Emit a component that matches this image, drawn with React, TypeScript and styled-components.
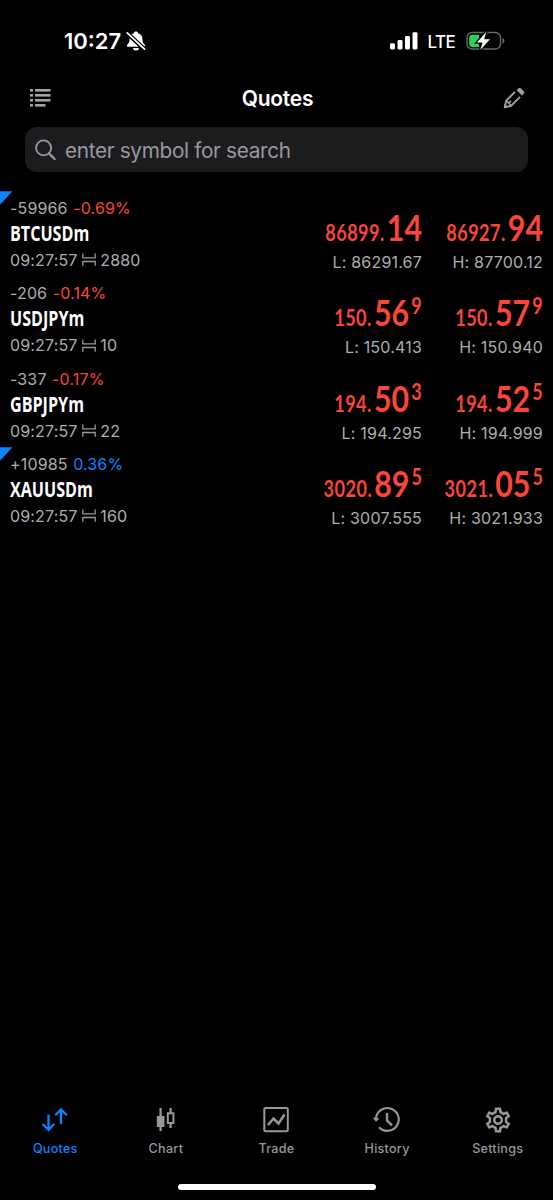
import React from 'react';
import styled, { createGlobalStyle } from 'styled-components';
import { MdOutlineSettings } from 'react-icons/md';

const RED = '#fa4638';
const BLUE = '#0a84ff';

const GlobalStyle = createGlobalStyle`
  body {
    margin: 0;
    background: #000;
    font-family: Inter, "Liberation Sans", sans-serif;
    color: #fff;
    -webkit-font-smoothing: antialiased;
  }
  svg { display: block; flex: none; }
`;

const Screen = styled.div`
  box-sizing: border-box;
  width: 553px;
  height: 1200px;
  display: flex;
  flex-direction: column;
  background: #000;
  overflow: hidden;
`;

const StatusBar = styled.header`
  box-sizing: border-box;
  height: 82px;
  padding: 0 48.5px 0 64px;
  display: flex;
  align-items: center;
  justify-content: space-between;
`;

const StatusGroup = styled.div`
  display: flex;
  align-items: center;
`;

const Clock = styled.span`
  font-size: 22px;
  font-weight: 600;
  width: 62px;
  letter-spacing: 0;
  white-space: nowrap;
`;

const Network = styled.span`
  font-size: 17px;
  font-weight: 500;
  width: 28px;
  margin: 1px 10px 0 9.5px;
  letter-spacing: -0.5px;
`;

const NavBar = styled.nav`
  box-sizing: border-box;
  height: 32px;
  padding: 0 27px 0 29px;
  display: grid;
  grid-template-columns: 24px 1fr 24px;
  align-items: center;
`;

const Title = styled.h1`
  margin: 0;
  padding-top: 2px;
  text-align: center;
  font-size: 21px;
  line-height: 30px;
  font-weight: 600;
  letter-spacing: -0.25px;
`;

const SearchField = styled.div`
  box-sizing: border-box;
  height: 45px;
  margin: 13px 25px 0;
  padding-left: 10px;
  display: flex;
  align-items: center;
  gap: 9px;
  border-radius: 12px;
  background: #1c1c1e;
  color: #98989f;
  font-size: 20.8px;
`;

const SearchHint = styled.span`
  padding-top: 2px;
  letter-spacing: -0.35px;
`;

const QuoteList = styled.main`
  flex: 1;
  padding-top: 19.3px;
`;

const QuoteRow = styled.article`
  box-sizing: border-box;
  position: relative;
  height: 85.33px;
  padding: 3.6px 10px 0;
  display: grid;
  grid-template-columns: 1fr 120px 121px;
`;

const Flag = styled.i`
  position: absolute;
  left: 0;
  top: 0;
  width: 12.5px;
  height: 13.5px;
  background: ${BLUE};
  clip-path: polygon(0 0, 100% 0, 0 100%);
`;

const Line = styled.div`
  display: flex;
  align-items: center;
  height: 26px;
  font-size: 16px;
  letter-spacing: 0.15px;
  color: #aeaeb0;
  white-space: pre;
`;

const Change = styled.span<{ $up: boolean }>`
  margin-left: 5.5px;
  color: ${p => (p.$up ? BLUE : RED)};
`;

const SymbolName = styled.div`
  height: 26px;
  line-height: 24px;
  font-family: "Open Sans", sans-serif;
  font-size: 20.8px;
  font-weight: 700;
  transform: scaleX(0.775);
  transform-origin: left;
`;

const Side = styled.div`
  display: flex;
  flex-direction: column;
  align-items: flex-end;
`;

const Price = styled.div`
  display: flex;
  align-items: baseline;
  height: 45px;
  padding-top: 9px;
  line-height: 45px;
  font-family: Lato, sans-serif;
  color: ${RED};
  transform: scaleX(0.82);
  transform-origin: right;
`;

const Whole = styled.span`
  margin-right: 2.5px;
  font-size: 22px;
  font-weight: 700;
  letter-spacing: 0.6px;
`;

const Pips = styled.span`
  font-size: 37px;
  font-weight: 700;
`;

const Tick = styled.span`
  align-self: flex-start;
  margin-left: 2.5px;
  font-size: 22px;
  line-height: 34px;
  font-weight: 700;
`;

const Extreme = styled.div`
  height: 26px;
  line-height: 26px;
  font-size: 16px;
  letter-spacing: 0.2px;
  color: #aeaeb0;
`;

const TabBar = styled.nav`
  height: 78px;
  display: grid;
  grid-template-columns: repeat(5, 1fr);
`;

const Tab = styled.div<{ $active?: boolean }>`
  display: flex;
  flex-direction: column;
  align-items: center;
  color: ${p => (p.$active ? BLUE : '#98989a')};
`;

const TabIcon = styled.div`
  display: flex;
  align-items: center;
  justify-content: center;
  height: 28px;
`;

const TabLabel = styled.span`
  margin-top: 6px;
  font-size: 12.6px;
  line-height: 17px;
  font-weight: 500;
  letter-spacing: 0.25px;
`;

const HomeIndicator = styled.div`
  width: 198px;
  height: 6px;
  margin: 0 auto 10px;
  border-radius: 3px;
  background: #fff;
`;

const BellOff = () => (
  <svg width="20" height="20" viewBox="0 0 20 20">
    <path d="M10 .6c-1.100 0-1.900.7-2.100 1.600C5 3 3.700 5.300 3.600 8c-.1 2.900-.6 4.100-2.200 5.600-.9.900-.4 2.200.7 2.200h15.800c1.100 0 1.600-1.300.7-2.200-1.600-1.500-2.100-2.700-2.200-5.600-.1-2.700-1.400-5-4.300-5.800C11.900 1.300 11.100.6 10 .6zM7 16.900a3 2.500 0 0 0 6 0z" fill="#fff" />
    <path d="M.8 1.800l18 16.800" stroke="#000" strokeWidth="4.400" />
    <path d="M1.200 1.800l17.300 16.400" stroke="#fff" strokeWidth="1.700" strokeLinecap="round" />
  </svg>
);

const Signal = () => (
  <svg width="28" height="18" viewBox="0 0 28 18" fill="#fff">
    <rect x="0" y="11.300" width="5" height="6.200" rx="1.400" />
    <rect x="7.500" y="8" width="5" height="9.500" rx="1.400" />
    <rect x="15" y="4" width="5" height="13.500" rx="1.400" />
    <rect x="22.500" y="0.300" width="5" height="17.200" rx="1.400" />
  </svg>
);

const Battery = () => (
  <svg width="39" height="20" viewBox="0 0 39 20">
    <rect x="1" y="1.500" width="33.500" height="16.500" rx="5.200" fill="none" stroke="#68686a" strokeWidth="1.400" />
    <path d="M36.500 7v5.600c1.100-.4 1.900-1.500 1.900-2.800s-.8-2.400-1.900-2.800z" fill="#68686a" />
    <path d="M6.500 3.700H13V16H6.500a3.300 3.300 0 0 1-3.300-3.300V7a3.300 3.300 0 0 1 3.300-3.300z" fill="#30d158" />
    <path d="M20.300.8L11 11.500h5.600L14.300 19 24 8.300h-5.800z" fill="#fff" stroke="#000" strokeWidth="2.600" paintOrder="stroke" />
  </svg>
);

const ListIcon = () => (
  <svg width="22" height="20" viewBox="0 0 22 20" fill="#a2a2a4">
    {[1, 6, 11, 16].map((y, i) => (
      <React.Fragment key={y}>
        <rect x="1" y={y} width="3" height="2.600" />
        <rect x="6" y={y} width={i === 3 ? 10.500 : 15.500} height="2.600" />
      </React.Fragment>
    ))}
  </svg>
);

const Pencil = () => (
  <svg width="24" height="24" viewBox="0 0 24 24" fill="none" stroke="#a2a2a4" strokeWidth="1.900">
    <path d="M13 5.800L4.200 14.600 2.700 21.200 9.300 19.700 18.100 10.900" strokeLinejoin="round" />
    <path d="M4.200 14.600L6.800 17.100 9.300 19.700M6.800 17.100L9 14.900" strokeWidth="1.500" />
    <path d="M2 22l.8-4 3.200 3.200z" fill="#a2a2a4" stroke="none" />
    <path d="M14.700 4.200l1.900-1.900a1.500 1.500 0 0 1 2.100 0l3.200 3.200a1.500 1.500 0 0 1 0 2.100l-1.900 1.900z" fill="#a2a2a4" stroke="none" />
  </svg>
);

const SearchIcon = () => (
  <svg width="21" height="22" viewBox="0 0 21 22" fill="none" stroke="#98989f" strokeLinecap="round">
    <circle cx="8.600" cy="8.900" r="7.500" strokeWidth="1.800" />
    <path d="M14.200 14.600l5.400 5.400" strokeWidth="2.300" />
  </svg>
);

const SpreadMark = styled.svg`
  margin: 0 4px 0 4.8px;
`;

const Spread = () => (
  <SpreadMark width="14" height="13" viewBox="0 0 14 13" fill="none" stroke="#98989f" strokeWidth="1.300">
    <path d="M.8 0.500v4.300h12.400V0.500M.8 12.800V8.500h12.400V12.800" />
  </SpreadMark>
);

const QuotesIcon = () => (
  <svg width="28" height="28" viewBox="0 0 28 28" fill="none" stroke="currentColor" strokeWidth="2.300">
    <path d="M7.500 8.500v15.500M1.700 18l5.800 5.800 5.800-5.800M20 18V3.500M14.200 9.200l5.800-5.800 5.800 5.800" />
  </svg>
);

const ChartIcon = () => (
  <svg width="28" height="28" viewBox="0 0 28 28" fill="none" stroke="currentColor" strokeWidth="2">
    <path d="M8.600 2v23M18.600 2v5M18.600 17v5" strokeWidth="2.300" />
    <rect x="4.800" y="10" width="7.600" height="11" fill="currentColor" stroke="none" />
    <rect x="15.800" y="7.300" width="5.600" height="9.700" />
  </svg>
);

const TradeIcon = () => (
  <svg width="28" height="28" viewBox="0 0 28 28" fill="none" stroke="currentColor" strokeWidth="2">
    <rect x="2.300" y="2" width="23.500" height="23.200" rx="1.500" />
    <path d="M6 19l5.500-6.500 5 5L22.500 8.500" strokeWidth="2.500" />
  </svg>
);

const HistoryIcon = () => (
  <svg width="28" height="28" viewBox="0 0 28 28" fill="none" stroke="currentColor" strokeWidth="2.100">
    <path d="M3 12.500A11.400 11.400 0 1 1 6 21.200" />
    <path d="M-.5 11.500L3 15.800 6.500 12.500z" fill="currentColor" stroke="none" />
    <path d="M14 7v7.500l5 4.800" strokeWidth="2.300" />
  </svg>
);

const SettingsIcon = () => <MdOutlineSettings size={30} />;

type Quote = {
  name: string;
  points: string;
  percent: string;
  up: boolean;
  flag: boolean;
  spread: string;
  bid: [string, string, string];
  ask: [string, string, string];
  low: string;
  high: string;
};

const quotes: Quote[] = [
  { name: 'BTCUSDm', points: '-59966', percent: '-0.69%', up: false, flag: true, spread: '2880', bid: ['86899.', '14', ''], ask: ['86927.', '94', ''], low: '86291.67', high: '87700.12' },
  { name: 'USDJPYm', points: '-206', percent: '-0.14%', up: false, flag: false, spread: '10', bid: ['150.', '56', '9'], ask: ['150.', '57', '9'], low: '150.413', high: '150.940' },
  { name: 'GBPJPYm', points: '-337', percent: '-0.17%', up: false, flag: false, spread: '22', bid: ['194.', '50', '3'], ask: ['194.', '52', '5'], low: '194.295', high: '194.999' },
  { name: 'XAUUSDm', points: '+10985', percent: '0.36%', up: true, flag: true, spread: '160', bid: ['3020.', '89', '5'], ask: ['3021.', '05', '5'], low: '3007.555', high: '3021.933' },
];

const PriceSide = ({ price, extreme }: { price: [string, string, string]; extreme: string }) => (
  <Side>
    <Price>
      <Whole>{price[0]}</Whole>
      <Pips>{price[1]}</Pips>
      {price[2] && <Tick>{price[2]}</Tick>}
    </Price>
    <Extreme>{extreme}</Extreme>
  </Side>
);

const tabs = [
  { label: 'Quotes', Icon: QuotesIcon },
  { label: 'Chart', Icon: ChartIcon },
  { label: 'Trade', Icon: TradeIcon },
  { label: 'History', Icon: HistoryIcon },
  { label: 'Settings', Icon: SettingsIcon },
];

export default function App() {
  return (
    <Screen>
      <GlobalStyle />
      <StatusBar>
        <StatusGroup>
          <Clock>10:27</Clock>
          <BellOff />
        </StatusGroup>
        <StatusGroup>
          <Signal />
          <Network>LTE</Network>
          <Battery />
        </StatusGroup>
      </StatusBar>
      <NavBar>
        <ListIcon />
        <Title>Quotes</Title>
        <Pencil />
      </NavBar>
      <SearchField>
        <SearchIcon />
        <SearchHint>enter symbol for search</SearchHint>
      </SearchField>
      <QuoteList>
        {quotes.map(q => (
          <QuoteRow key={q.name}>
            {q.flag && <Flag />}
            <div>
              <Line>
                {q.points}
                <Change $up={q.up}>{q.percent}</Change>
              </Line>
              <SymbolName>{q.name}</SymbolName>
              <Line>
                09:27:57
                <Spread />
                {q.spread}
              </Line>
            </div>
            <PriceSide price={q.bid} extreme={`L: ${q.low}`} />
            <PriceSide price={q.ask} extreme={`H: ${q.high}`} />
          </QuoteRow>
        ))}
      </QuoteList>
      <TabBar>
        {tabs.map(({ label, Icon }, i) => (
          <Tab key={label} $active={i === 0}>
            <TabIcon>
              <Icon />
            </TabIcon>
            <TabLabel>{label}</TabLabel>
          </Tab>
        ))}
      </TabBar>
      <HomeIndicator />
    </Screen>
  );
}
